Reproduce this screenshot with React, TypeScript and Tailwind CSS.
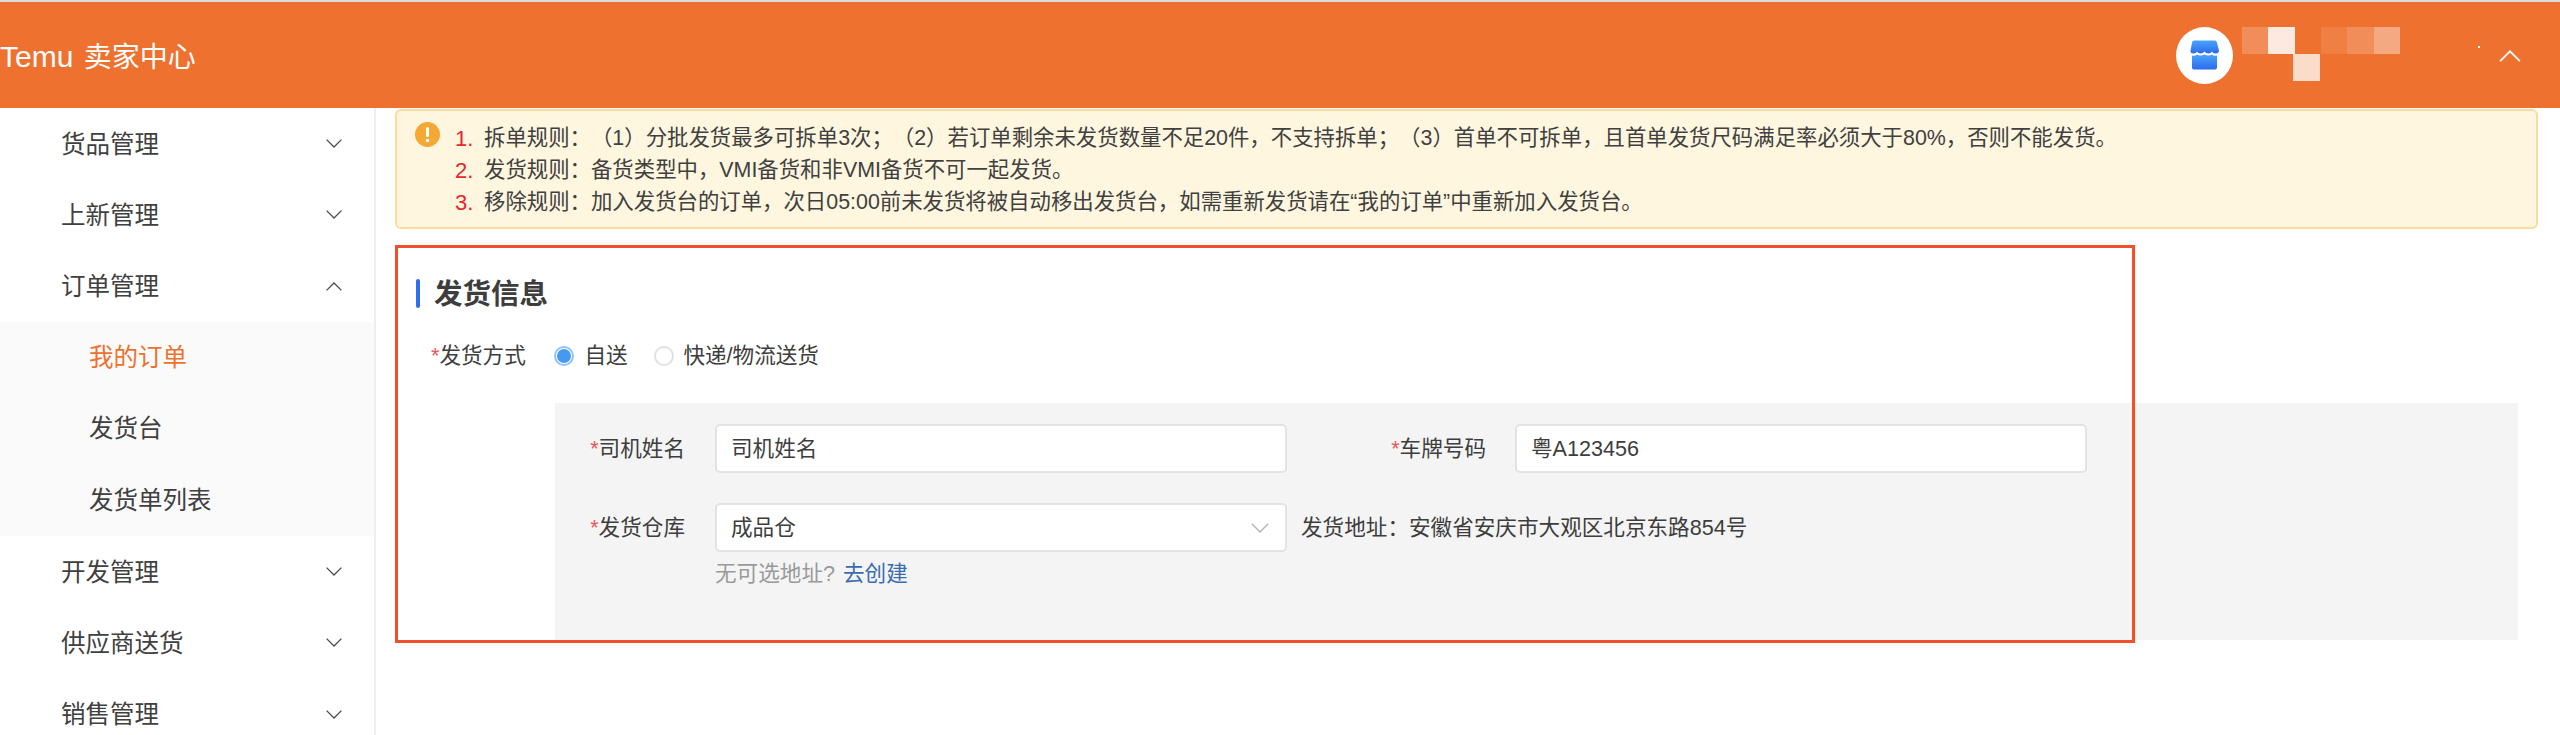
import React from "react";

const Chevron = ({ up = false, className = "" }: { up?: boolean; className?: string }) => (
  <svg viewBox="0 0 16 9" fill="none" stroke="currentColor" strokeWidth="1.3" className={className}>
    <path d={up ? "M0.6 8.4 8 1 15.4 8.4" : "M0.6 0.6 8 8 15.4 0.6"} />
  </svg>
);

const NavRow = ({ label, up = false }: { label: string; up?: boolean }) => (
  <div className="flex h-[71.3px] items-center justify-between pl-[61px] pr-[32px] text-[24.5px] text-[#404040]">
    <span className="pt-[3px]">{label}</span>
    <Chevron up={up} className="h-[9px] w-[16px] text-[#4a4a4a]" />
  </div>
);

const SubRow = ({ label, active = false }: { label: string; active?: boolean }) => (
  <div className={`flex h-[71.3px] items-center pl-[89px] pt-[2px] text-[24.5px] ${active ? "text-[#ee712f]" : "text-[#404040]"}`}>
    {label}
  </div>
);

const Label = ({ text, className = "" }: { text: string; className?: string }) => (
  <div className={`flex h-[48px] items-center justify-end pt-[2px] text-[21.6px] text-[#3d3d3d] ${className}`}>
    <span className="text-[#f0555a]">*</span>
    {text}
  </div>
);

const Field = ({ text, children }: { text: string; children?: React.ReactNode }) => (
  <div className="flex h-[49px] w-[572px] items-center justify-between rounded-[5px] border-2 border-[#e3e3e3] bg-white pl-[14px] pr-[16px] text-[21.6px] text-[#3d3d3d]">
    <span className="pt-[2px]">{text}</span>
    {children}
  </div>
);

const Rule = ({ n, children }: { n: string; children: React.ReactNode }) => (
  <div className="flex h-[32px] items-center">
    <span className="w-[29px] shrink-0 text-[22px] text-[#e8262b]">{n}</span>
    <span>{children}</span>
  </div>
);

const blocks = [
  "bg-white/20",
  "bg-white/85",
  "bg-transparent",
  "bg-white/10",
  "bg-white/20",
  "bg-white/40",
];

export default function App() {
  return (
    <div className="flex h-[735px] w-[2560px] flex-col overflow-hidden border-t-2 border-[#dcdcdc] bg-white font-['Liberation_Sans','Noto_Sans_CJK_SC',sans-serif] [text-spacing-trim:space-all]">
      <header className="flex h-[106px] shrink-0 items-center bg-[#ee712f] text-white">
        <div className="pt-[2px] text-[28px]">
          <span className="mr-[2px] text-[30px]">Temu </span>卖家中心
        </div>
        <div className="ml-auto flex items-center pr-[39px]">
          <div className="flex h-[57px] w-[57px] items-center justify-center rounded-full bg-white">
            <svg viewBox="0 0 30 30" className="h-[30px] w-[30px]">
              <defs>
                <linearGradient id="shop" x1="0" y1="0" x2="0" y2="1">
                  <stop offset="0" stopColor="#4aa3fb" />
                  <stop offset="1" stopColor="#2b6cec" />
                </linearGradient>
              </defs>
              <path
                fill="url(#shop)"
                d="M4 0.5H25Q26.5 0.5 26.8 2L29 10.5Q29 13.5 25.5 13.5Q22.5 13.5 22 11.5Q21 13.5 18.5 13.5Q15.8 13.5 14.5 11.5Q13.2 13.5 10.5 13.5Q8 13.5 7 11.5Q6.5 13.5 3.5 13.5Q0 13.5 0.5 10.5L2.2 2Q2.5 0.5 4 0.5Z"
              />
              <path
                fill="url(#shop)"
                d="M2 15.5Q5 16.5 7 14.5Q10.5 16.5 14.5 14.5Q18.5 16.5 22 14.5Q24 16.5 27 15.5V27.5Q27 29.5 25 29.5H4Q2 29.5 2 27.5Z"
              />
            </svg>
          </div>
          <div className="ml-[9px] flex w-[158px] flex-col self-start">
            <div className="flex">
              {blocks.map((b, i) => (
                <div key={i} className={`h-[27px] w-[26.6px] ${b}`} />
              ))}
            </div>
            <div className="flex pl-[51px]">
              <div className="h-[27px] w-[27px] bg-white/75" />
            </div>
          </div>
          <div className="ml-[78px] mt-[19px] h-[2px] w-[2px] self-start bg-white" />
          <Chevron up className="ml-[19px] mt-[2px] h-[12px] w-[22px] text-white" />
        </div>
      </header>

      <div className="flex min-h-0 flex-1">
        <aside className="w-[376px] shrink-0 border-r-2 border-[#eeeeee]">
          <NavRow label="货品管理" />
          <NavRow label="上新管理" />
          <NavRow label="订单管理" up />
          <div className="bg-[#fafafa]">
            <SubRow label="我的订单" active />
            <SubRow label="发货台" />
            <SubRow label="发货单列表" />
          </div>
          <NavRow label="开发管理" />
          <NavRow label="供应商送货" />
          <NavRow label="销售管理" />
        </aside>

        <main className="min-w-0 flex-1 pl-[19px] pr-[22px] pt-[1px]">
          <div className="flex h-[120px] rounded-[6px] border-2 border-[#fbdc9c] bg-[#fef6df] pl-[18px] pt-[11px] text-[21.4px] text-[#404040]">
            <svg viewBox="0 0 25 25" className="mr-[15px] h-[25px] w-[25px] shrink-0">
              <circle cx="12.5" cy="12.5" r="12.5" fill="#f5a833" />
              <rect x="11" y="5" width="3" height="10" rx="1.5" fill="#fff" />
              <circle cx="12.5" cy="18.5" r="1.8" fill="#fff" />
            </svg>
            <div>
              <Rule n="1.">拆单规则：（1）分批发货最多可拆单3次；（2）若订单剩余未发货数量不足20件，不支持拆单；（3）首单不可拆单，且首单发货尺码满足率必须大于80%，否则不能发货。</Rule>
              <Rule n="2.">发货规则：备货类型中，VMI备货和非VMI备货不可一起发货。</Rule>
              <Rule n="3.">移除规则：加入发货台的订单，次日05:00前未发货将被自动移出发货台，如需重新发货请在“我的订单”中重新加入发货台。</Rule>
            </div>
          </div>

          <section className="relative mt-[16px] pt-[34px]">
            <div className="flex h-[29px] items-center pl-[21px]">
              <div className="h-[29px] w-[4px] rounded-[2px] bg-[#2f6fed]" />
              <h2 className="ml-[14px] pt-[2px] text-[28.5px] font-bold text-[#3d3d3d]">发货信息</h2>
            </div>

            <div className="mt-[27px] flex h-[40px] items-center pl-[36px] pt-[2px] text-[21.6px] text-[#3d3d3d]">
              <span className="text-[#f0555a]">*</span>
              <span className="w-[115px]">发货方式</span>
              <span className="flex h-[20px] w-[20px] items-center justify-center rounded-full border-2 border-[#8fc4f7] bg-white">
                <span className="h-[14px] w-[14px] rounded-full bg-[#459af0]" />
              </span>
              <span className="ml-[10px] w-[70px]">自送</span>
              <span className="h-[20px] w-[20px] rounded-full border-2 border-[#e1e1e1] bg-white" />
              <span className="ml-[9px]">快递/物流送货</span>
            </div>

            <div className="ml-[160px] mr-[20px] mt-[28px] h-[237px] bg-[#f4f4f4] pt-[21px]">
              <div className="flex items-start">
                <Label text="司机姓名" className="w-[130px]" />
                <div className="ml-[30px]">
                  <Field text="司机姓名" />
                </div>
                <Label text="车牌号码" className="ml-[69px] w-[130px]" />
                <div className="ml-[29px]">
                  <Field text="粤A123456" />
                </div>
              </div>
              <div className="mt-[30px] flex items-start">
                <Label text="发货仓库" className="w-[130px]" />
                <div className="ml-[30px]">
                  <Field text="成品仓">
                    <Chevron className="h-[10px] w-[18px] text-[#b4b4b4]" />
                  </Field>
                  <div className="mt-[6px] text-[21.6px] leading-[32px] text-[#9a9a9a]">
                    无可选地址? <span className="ml-[2px] text-[#3b6cb0]">去创建</span>
                  </div>
                </div>
                <div className="ml-[14px] flex h-[48px] items-center pt-[3px] text-[21.6px] text-[#3d3d3d]">
                  发货地址：安徽省安庆市大观区北京东路854号
                </div>
              </div>
            </div>

            <div className="pointer-events-none absolute left-0 top-0 h-[398px] w-[1740px] border-[3px] border-[#f1502a]" />
          </section>
        </main>
      </div>
    </div>
  );
}
